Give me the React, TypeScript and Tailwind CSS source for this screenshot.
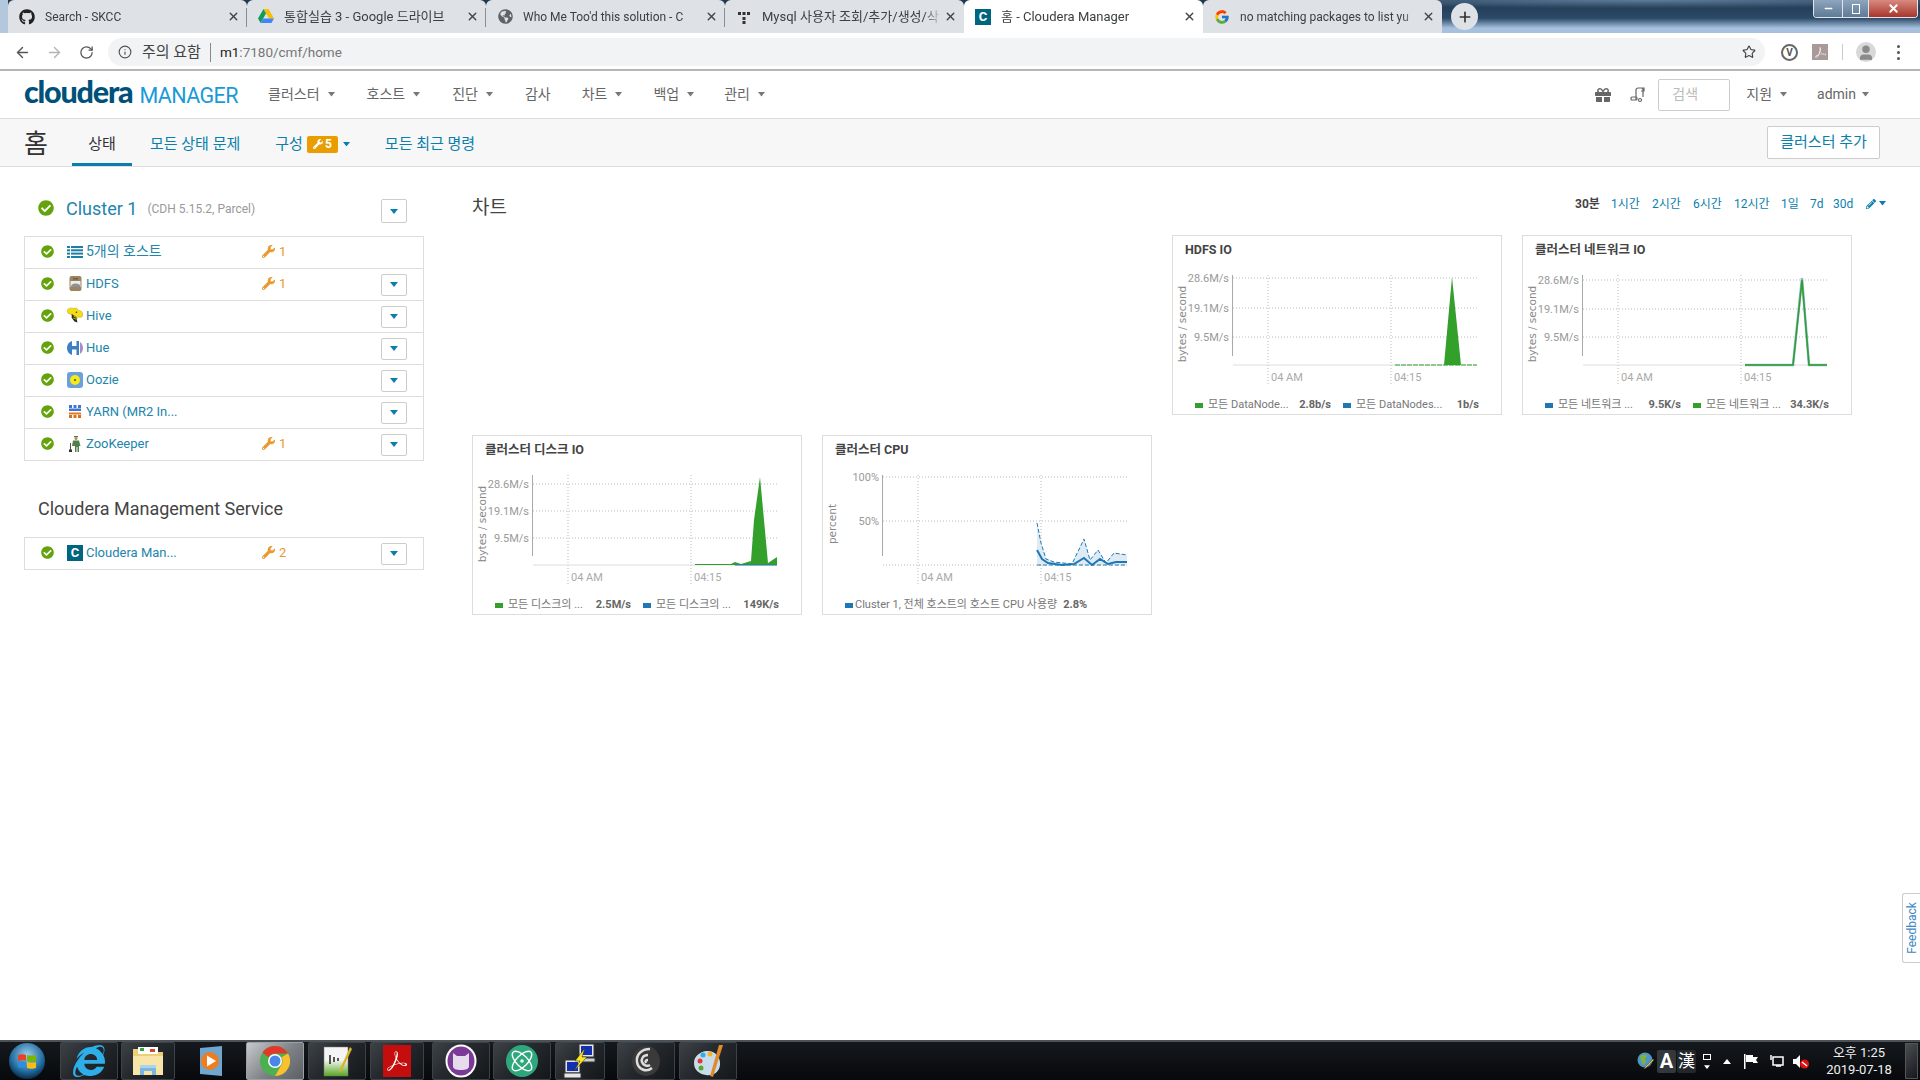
import React from 'react';
import { ArrowLeft, ArrowRight, RotateCw, Info, Star, Plus, X, Minus, User, Atom } from 'lucide-react';
import {
  FaGithub, FaGlobeAmericas, FaCheckCircle, FaWrench, FaGift,
  FaPencilAlt, FaInternetExplorer,
} from 'react-icons/fa';
import { FcGoogle } from 'react-icons/fc';
import { SiAdobeacrobatreader } from 'react-icons/si';

const Caret = ({ color = '#777', size = 7 }: { color?: string; size?: number }) => (
  <svg width={size} height={size / 2 + 1} viewBox="0 0 8 5" className="shrink-0">
    <path d="M0 0h8L4 5z" fill={color} />
  </svg>
);

const DriveIcon = () => (
  <svg width="16" height="15" viewBox="0 0 16 15">
    <path d="M5.5 0h5l5.5 9.5h-5z" fill="#fbbc04" />
    <path d="M5.5 0 0 9.5 2.6 14l5.4-9.5z" fill="#0f9d58" />
    <path d="M2.6 14h10.8l2.6-4.5H5.3z" fill="#4285f4" />
  </svg>
);

const MysqlIcon = () => (
  <svg width="14" height="14" viewBox="0 0 14 14" fill="#333">
    <rect x="1" y="2" width="3" height="3" />
    <rect x="5.5" y="2" width="3" height="3" />
    <rect x="10" y="2" width="3" height="3" />
    <rect x="5.5" y="7" width="3" height="3" />
    <rect x="5.5" y="11" width="3" height="3" />
  </svg>
);

const ClouderaC = ({ size = 16 }: { size?: number }) => (
  <span
    style={{ width: size, height: size, fontSize: size - 3 }}
    className="flex shrink-0 items-center justify-center bg-[#00657f] font-bold leading-none text-white"
  >
    C
  </span>
);

const tabs = [
  { title: 'Search - SKCC', size: 'text-[12px]', icon: <FaGithub size={16} className="text-[#222]" /> },
  { title: '통합실습 3 - Google 드라이브', size: 'text-[13px]', icon: <DriveIcon /> },
  { title: "Who Me Too'd this solution - C", size: 'text-[12px]', icon: <FaGlobeAmericas size={15} className="text-[#5f6368]" /> },
  { title: 'Mysql 사용자 조회/추가/생성/삭', size: 'text-[13px]', icon: <MysqlIcon /> },
  { title: '홈 - Cloudera Manager', size: 'text-[13px]', icon: <ClouderaC />, active: true },
  { title: 'no matching packages to list yu', size: 'text-[12px]', icon: <FcGoogle size={16} /> },
];

function TabStrip() {
  return (
    <div className="flex h-[33px] items-start bg-[linear-gradient(to_right,#b4c8dd_0px,#b4c8dd_8px,transparent_8px),radial-gradient(ellipse_at_1650px_0px,#5d7d9b_0%,transparent_18%),linear-gradient(to_bottom,#1f374f_0%,#2b4a68_55%,#a6c0dd_85%,#a6c0dd_100%)] pl-2">
      {tabs.map((tab, i) => (
        <div
          key={i}
          className={`relative flex h-[33px] w-[239px] shrink-0 items-center rounded-t-[6px] pl-[11px] ${tab.active ? 'bg-white' : 'bg-[#dee1e6]'}`}
        >
          <span className="flex w-[16px] shrink-0 items-center justify-center">{tab.icon}</span>
          <span className={`ml-[10px] w-[180px] overflow-hidden whitespace-nowrap text-[#3c4043] [mask-image:linear-gradient(to_right,black_90%,transparent)] ${tab.size}`}>
            {tab.title}
          </span>
          <X size={13} strokeWidth={2.5} className="absolute left-[219px] top-[10px] text-[#444]" />
          {i < 3 && <span className="absolute right-0 top-[8px] h-[19px] w-px bg-[#8b8d90]" />}
        </div>
      ))}
      <div className="ml-[9px] mt-[3px] flex h-[27px] w-[27px] items-center justify-center rounded-full bg-[#dee1e6]">
        <Plus size={16} strokeWidth={2.5} className="text-[#333]" />
      </div>
      <div className="ml-auto mr-[2px] flex h-[18px] overflow-hidden rounded-b-[4px] border border-t-0 border-[#dfe6ee]">
        <div className="flex w-[28px] items-center justify-center bg-[linear-gradient(#8ea5bd,#5f7a95)] text-white">
          <Minus size={11} strokeWidth={3} />
        </div>
        <div className="flex w-[27px] items-center justify-center border-x border-[#dfe6ee] bg-[linear-gradient(#8ea5bd,#5f7a95)]">
          <span className="h-[10px] w-[8px] border border-white" />
        </div>
        <div className="flex w-[48px] items-center justify-center bg-[linear-gradient(#d88a80,#a8352a)] text-white">
          <X size={13} strokeWidth={3.5} />
        </div>
      </div>
    </div>
  );
}

function Toolbar() {
  return (
    <div className="flex h-[38px] items-center border-b-2 border-[#b5b5b5] bg-white pl-[14px] pt-[2px]">
      <ArrowLeft size={17} className="text-[#555]" />
      <ArrowRight size={17} className="ml-[15px] text-[#b5b5b5]" />
      <RotateCw size={15} className="ml-[16px] text-[#555]" />
      <div className="ml-[14px] flex h-[28px] w-[1657px] items-center rounded-full bg-[#f1f3f4] pl-[10px]">
        <Info size={14} className="text-[#555]" />
        <span className="ml-[10px] text-[15px] text-[#444]">주의 요함</span>
        <span className="ml-[9px] h-[19px] w-px bg-[#888]" />
        <span className="ml-[9px] text-[13.5px] text-[#222]">m1</span>
        <span className="text-[13.5px] text-[#777]">:7180/cmf/home</span>
        <Star size={14} className="ml-auto mr-[9px] text-[#444]" />
      </div>
      <div className="ml-[16px] flex h-[17px] w-[17px] items-center justify-center rounded-full border-2 border-[#666] text-[10px] font-bold text-[#555]">
        V
      </div>
      <div className="ml-[14px] flex h-[16px] w-[16px] items-center justify-center bg-[#a99] text-[#fff]">
        <SiAdobeacrobatreader size={11} />
      </div>
      <span className="ml-[14px] h-[16px] w-px bg-[#ccc]" />
      <div className="ml-[13px] flex h-[20px] w-[20px] items-end justify-center overflow-hidden rounded-full bg-[#d8d8d8]">
        <User size={18} fill="#8a8a8a" stroke="#8a8a8a" />
      </div>
      <div className="ml-[21px] flex flex-col gap-[3px]">
        <span className="h-[3px] w-[3px] rounded-full bg-[#555]" />
        <span className="h-[3px] w-[3px] rounded-full bg-[#555]" />
        <span className="h-[3px] w-[3px] rounded-full bg-[#555]" />
      </div>
    </div>
  );
}

const navItems = [
  { label: '클러스터', caret: true, nudge: '' },
  { label: '호스트', caret: true, nudge: '' },
  { label: '진단', caret: true, nudge: '' },
  { label: '감사', caret: false, nudge: '' },
  { label: '차트', caret: true, nudge: '-ml-[1px]' },
  { label: '백업', caret: true, nudge: '-ml-[1px]' },
  { label: '관리', caret: true, nudge: '-ml-[2px]' },
];

function TopNav() {
  return (
    <div className="flex h-[48px] items-center border-b border-[#ddd] bg-white pl-6">
      <div className="flex w-[216px] -translate-y-[3px] items-baseline">
        <span className="text-[30.5px] font-black leading-none tracking-[-1.2px] text-[#00517a] [font-family:Lato,sans-serif]">cloudera</span>
        <span className="ml-[7px] text-[21.5px] leading-none tracking-[-0.6px] text-[#1a9ad6]">MANAGER</span>
      </div>
      <div className="ml-[28px] flex gap-8">
        {navItems.map(item => (
          <div key={item.label} className={`flex items-center gap-2 text-[14px] text-[#666] ${item.nudge}`}>
            {item.label}
            {item.caret && <Caret />}
          </div>
        ))}
      </div>
      <div className="ml-auto flex items-center pr-[51px]">
        <FaGift size={16} className="text-[#666]" />
        <svg width="16" height="16" viewBox="0 0 16 16" fill="none" stroke="#666" strokeWidth="1.2" className="ml-[19px]">
          <path d="M6 13V3a2 2 0 0 1 2-2h6v3h-3M8 1h3a2 2 0 0 1 2 2v7" />
          <rect x="1" y="10" width="6" height="3" rx="1" />
          <circle cx="10" cy="13" r="1.5" />
        </svg>
        <div className="ml-[12px] flex h-[32px] w-[72px] items-center rounded-[2px] border border-[#ccc] bg-white pl-[13px] text-[14px] text-[#bbb]">
          검색
        </div>
        <div className="ml-[16px] flex items-center gap-2 text-[14px] text-[#666]">
          지원
          <Caret />
        </div>
        <div className="ml-[30px] flex items-center gap-[6px] text-[14px] text-[#666]">
          admin
          <Caret />
        </div>
      </div>
    </div>
  );
}

function SubNav() {
  return (
    <div className="flex h-[48px] items-stretch border-b border-[#ddd] bg-[#f7f7f7] pl-6 text-[15px]">
      <div className="flex w-[48px] items-center pt-[2px] text-[26px] leading-none text-[#333]">홈</div>
      <div className="flex w-[60px] items-center justify-center border-b-[3px] border-[#0a7fad] pt-[6px] text-[#333]">상태</div>
      <div className="ml-[18px] flex items-center pt-[3px] text-[#0a7fad]">모든 상태 문제</div>
      <div className="ml-[35px] flex items-center pt-[3px] text-[#0a7fad]">
        구성
        <span className="ml-[4px] flex h-[17px] w-[31px] items-center justify-center gap-[2px] rounded-[2px] bg-[#e99d00] text-[12px] font-bold text-white">
          <FaWrench size={10} />5
        </span>
        <span className="ml-[5px]">
          <Caret color="#0a7fad" />
        </span>
      </div>
      <div className="ml-[35px] flex items-center pt-[3px] text-[#0a7fad]">모든 최근 명령</div>
      <div className="ml-auto mr-[40px] flex items-center">
        <div className="flex h-[33px] w-[113px] items-center justify-center rounded-[2px] border border-[#ccc] bg-white text-[#0a7fad]">
          클러스터 추가
        </div>
      </div>
    </div>
  );
}

const HostsIcon = () => (
  <svg width="16" height="12" viewBox="0 0 16 12" fill="#1c7fa6">
    <rect x="0" y="0" width="3" height="2" />
    <rect x="4" y="0" width="12" height="2" />
    <rect x="0" y="3.300" width="3" height="2" />
    <rect x="4" y="3.300" width="12" height="2" />
    <rect x="0" y="6.600" width="3" height="2" />
    <rect x="4" y="6.600" width="12" height="2" />
    <rect x="0" y="10" width="3" height="2" />
    <rect x="4" y="10" width="12" height="2" />
  </svg>
);

const HdfsIcon = () => (
  <svg width="13" height="15" viewBox="0 0 13 15">
    <rect x="0.500" y="0" width="12" height="15" rx="2" fill="#9a8560" />
    <rect x="1.500" y="5" width="10" height="6" fill="#eeece6" />
    <path d="M2 10c2-3 5-3 9-1v2H2z" fill="#8d9296" />
    <rect x="4" y="2" width="5" height="1.500" fill="#6f5f44" />
  </svg>
);

const HiveIcon = () => (
  <svg width="17" height="17" viewBox="0 0 17 17">
    <path d="M0 3c2-3 5-3 7-2 2-1 4 0 5 2 2 0 4 1 5 4 0 3-2 4-4 3l-2 1-4-3C4 8 2 6 1 6z" fill="#f4dd12" stroke="#a08f10" strokeWidth=".4" />
    <path d="M5 7l5 3 1 6-3-1-3-4z" fill="#2e2a18" />
    <path d="M7 9l3 1.500M6.500 11l3.500 1.500" stroke="#f4dd12" strokeWidth=".8" />
    <circle cx="10" cy="5" r=".8" fill="#333" />
  </svg>
);

const HueIcon = () => (
  <svg width="16" height="16" viewBox="0 0 16 16">
    <path d="M5 1v14C2 14 0 11.500 0 8s2-6 5-7z" fill="#3d7fc4" />
    <rect x="4" y="6" width="8" height="3.500" fill="#3d7fc4" />
    <rect x="9.500" y="1" width="2.500" height="14" fill="#3d7fc4" />
    <path d="M13 2c2 1.500 3 3.500 3 6s-1 4.500-3 6z" fill="#a88cc8" />
  </svg>
);

const OozieIcon = () => (
  <svg width="16" height="16" viewBox="0 0 16 16">
    <rect width="16" height="16" rx="3" fill="#6aa0dc" />
    <circle cx="8" cy="8" r="5" fill="#f6ea12" />
    <circle cx="8" cy="8" r="1" fill="#444" />
  </svg>
);

const YarnIcon = () => (
  <svg width="12" height="13" viewBox="0 0 12 13">
    <rect x="0" y="0" width="3" height="3" fill="#3f74cf" />
    <rect x="4.500" y="0" width="3" height="3" fill="#3f74cf" />
    <rect x="9" y="0" width="3" height="3" fill="#3f74cf" />
    <rect x="0" y="3.500" width="12" height="2.500" fill="#3f74cf" />
    <rect x="0" y="7.500" width="12" height="2" fill="#e07a20" />
    <rect x="0" y="10" width="3" height="3" fill="#d9701a" />
    <rect x="4.500" y="10" width="3" height="3" fill="#d9701a" />
    <rect x="9" y="10" width="3" height="3" fill="#d9701a" />
  </svg>
);

const ZookeeperIcon = () => (
  <svg width="12" height="16" viewBox="0 0 12 16">
    <rect x="5" y="0" width="4" height="1.200" fill="#55704a" />
    <circle cx="7" cy="2.500" r="1.500" fill="#b58a60" />
    <path d="M4 4.500h6l1.500 5.500h-1.500V16H8.500v-5h-1v5H6v-6H3z" fill="#4f7f4a" />
    <rect x="1" y="7" width="1" height="7" fill="#6b5030" />
    <rect x="0" y="13.500" width="3" height="2.500" fill="#333" />
  </svg>
);

const services = [
  { name: '5개의 호스트', icon: <HostsIcon />, wrench: 1, noMenu: true },
  { name: 'HDFS', icon: <HdfsIcon />, wrench: 1 },
  { name: 'Hive', icon: <HiveIcon /> },
  { name: 'Hue', icon: <HueIcon /> },
  { name: 'Oozie', icon: <OozieIcon /> },
  { name: 'YARN (MR2 In...', icon: <YarnIcon /> },
  { name: 'ZooKeeper', icon: <ZookeeperIcon />, wrench: 1 },
];

type RowProps = { name: string; icon: React.ReactNode; wrench?: number; noMenu?: boolean };

const MenuButton = ({ h = 'h-[22px]' }: { h?: string }) => (
  <div className={`flex w-[26px] items-center justify-center rounded-[2px] border border-[#ccc] bg-white ${h}`}>
    <Caret color="#0a7fad" size={8} />
  </div>
);

function ServiceRow({ name, icon, wrench, noMenu }: RowProps) {
  const hangul = /[가-힣]/.test(name);
  return (
    <div className="flex h-8 items-center border-b border-[#ddd] pl-[16px] last:h-[31px] last:border-b-0">
      <FaCheckCircle size={13} className="shrink-0 -translate-y-[1px] text-[#65a30d]" />
      <span className="ml-[13px] flex w-[16px] shrink-0 -translate-y-[1px] justify-center">{icon}</span>
      <span className={`ml-[3px] w-[176px] -translate-y-[1px] whitespace-nowrap text-[#2285ad] ${hangul ? 'text-[14px]' : 'text-[13px]'}`}>{name}</span>
      <span className="flex w-[119px] -translate-y-[1px] items-center gap-[4px] text-[13px] text-[#e89a2c]">
        {wrench && (
          <>
            <FaWrench size={13} />
            {wrench}
          </>
        )}
      </span>
      {!noMenu && <MenuButton />}
    </div>
  );
}

function Sidebar() {
  return (
    <div className="w-[400px] shrink-0 pt-[32px]">
      <div className="flex h-[24px] items-center pl-[14px]">
        <FaCheckCircle size={16} className="-translate-y-[3px] text-[#65a30d]" />
        <span className="ml-[12px] -translate-y-[3px] text-[18px] text-[#2285ad]">Cluster 1</span>
        <span className="ml-[10px] -translate-y-[2px] text-[12px] text-[#999]">(CDH 5.15.2, Parcel)</span>
        <span className="ml-auto mr-[17px]">
          <MenuButton h="h-[24px]" />
        </span>
      </div>
      <div className="mt-[13px] border border-[#ddd]">
        {services.map(s => (
          <ServiceRow key={s.name} {...s} />
        ))}
      </div>
      <h2 className="mt-[36px] pl-[14px] text-[18px] leading-[24px] text-[#444]">Cloudera Management Service</h2>
      <div className="mt-[16px] border border-[#ddd]">
        <ServiceRow name="Cloudera Man..." icon={<ClouderaC />} wrench={2} />
      </div>
    </div>
  );
}

type Grid = { y: number; label: string };
type LegendItem = { color: string; label: string; value: string };

type ChartProps = {
  title: string;
  axis: string;
  grid: Grid[];
  legend: LegendItem[];
  wide?: boolean;
  dottedBase?: boolean;
  children: React.ReactNode;
  className?: string;
};

function Chart({ title, axis, grid, legend, wide, dottedBase, children, className }: ChartProps) {
  return (
    <div className={`h-[180px] border border-[#ddd] bg-white ${className ?? ''}`}>
      <div className="pl-[12px] pt-[6px] text-[12.5px] font-bold leading-[16px] text-[#444]">{title}</div>
      <svg width="328" height="130" viewBox="1 23 328 130" className="block">
        <text
          transform="rotate(-90 14 89)"
          x="14"
          y="89"
          textAnchor="middle"
          fontSize="10.5"
          fill="#888"
          style={{ fontFamily: '"DejaVu Sans", sans-serif' }}
        >
          {axis}
        </text>
        <line x1="60.5" y1="40" x2="60.5" y2="121" stroke="#aaa" />
        {grid.map(g => (
          <g key={g.label}>
            <line x1="61" y1={g.y} x2="305" y2={g.y} stroke="#bbb" strokeDasharray="1 2" />
            <text x="57" y={g.y + 4} textAnchor="end" fontSize="11" fill="#999">
              {g.label}
            </text>
          </g>
        ))}
        <line x1="96" y1="40" x2="96" y2="151" stroke="#bbb" strokeDasharray="1 2" />
        <line x1="219" y1="40" x2="219" y2="151" stroke="#bbb" strokeDasharray="1 2" />
        <line x1="61" y1="130" x2="305" y2="130" stroke={dottedBase ? '#bbb' : '#ddd'} strokeDasharray={dottedBase ? '1 2' : undefined} />
        <text x="99" y="146" fontSize="11" fill="#aaa">04 AM</text>
        <text x="222" y="146" fontSize="11" fill="#aaa">04:15</text>
        {children}
      </svg>
      <div className="mt-[10px] flex gap-[12px] pl-[22px] text-[11px] leading-[14px] text-[#777]">
        {legend.map(item => (
          <div key={item.label + item.value} className={`flex items-center whitespace-nowrap ${wide ? '' : 'w-[136px]'}`}>
            <span className="h-[5px] w-[8px] shrink-0" style={{ backgroundColor: item.color }} />
            <span className={`${wide ? 'ml-[2px]' : 'ml-[5px]'} flex-1`}>{item.label}</span>
            <span className={`${wide ? 'ml-[6px]' : ''} font-bold text-[#666]`}>{item.value}</span>
          </div>
        ))}
      </div>
    </div>
  );
}

const GREEN = '#33a02c';
const BLUE = '#1f78b4';
const ioGrid = [
  { y: 43, label: '28.6M/s' },
  { y: 73, label: '19.1M/s' },
  { y: 102, label: '9.5M/s' },
];

function ChartsPanel() {
  return (
    <div className="flex-1 pl-[48px] pr-[34px] pt-[26px]">
      <div className="flex h-[28px] items-center">
        <h2 className="pt-[2px] text-[19px] text-[#444]">차트</h2>
        <div className="ml-auto -mt-[7px] flex items-center text-[12px] text-[#0a7fad]">
          <span className="w-[36px] font-bold text-[#444]">30분</span>
          <span className="w-[41px]">1시간</span>
          <span className="w-[41px]">2시간</span>
          <span className="w-[41px]">6시간</span>
          <span className="w-[47px]">12시간</span>
          <span className="w-[29px]">1일</span>
          <span className="w-[23px]">7d</span>
          <span className="w-[33px]">30d</span>
          <FaPencilAlt size={10} />
          <span className="ml-[3px]">
            <Caret color="#0a7fad" />
          </span>
        </div>
      </div>
      <div className="mt-[14px] grid grid-cols-[repeat(4,330px)] gap-x-5 gap-y-5">
        <Chart
          className="col-start-3"
          title="HDFS IO"
          axis="bytes / second"
          grid={ioGrid}
          legend={[
            { color: GREEN, label: '모든 DataNode...', value: '2.8b/s' },
            { color: BLUE, label: '모든 DataNodes...', value: '1b/s' },
          ]}
        >
          <path d="M272 130 280 42 289 130z" fill={GREEN} />
          <line x1="223" y1="130" x2="305" y2="130" stroke={GREEN} strokeWidth="1" strokeDasharray="5 1" />
        </Chart>
        <Chart
          title="클러스터 네트워크 IO"
          axis="bytes / second"
          grid={[
            { y: 45, label: '28.6M/s' },
            { y: 74, label: '19.1M/s' },
            { y: 102, label: '9.5M/s' },
          ]}
          legend={[
            { color: BLUE, label: '모든 네트워크 ...', value: '9.5K/s' },
            { color: GREEN, label: '모든 네트워크 ...', value: '34.3K/s' },
          ]}
        >
          <path d="M223 130H271L280 43 287 130H305" fill="none" stroke={BLUE} strokeWidth="2.5" opacity=".5" />
          <path d="M223 130H271L280 45 287 130H305" fill="none" stroke={GREEN} strokeWidth="1.6" />
        </Chart>
        <Chart
          className="col-start-1"
          title="클러스터 디스크 IO"
          axis="bytes / second"
          grid={[
            { y: 49, label: '28.6M/s' },
            { y: 76, label: '19.1M/s' },
            { y: 103, label: '9.5M/s' },
          ]}
          legend={[
            { color: GREEN, label: '모든 디스크의 ...', value: '2.5M/s' },
            { color: BLUE, label: '모든 디스크의 ...', value: '149K/s' },
          ]}
        >
          <path d="M223 130V129H259L263 127 269 129 279 126 282 85 288 42 296 128 305 122V130z" fill={GREEN} />
          <line x1="263" y1="130" x2="305" y2="130" stroke={BLUE} strokeWidth="1" />
        </Chart>
        <Chart
          title="클러스터 CPU"
          axis="percent"
          dottedBase
          wide
          grid={[
            { y: 42, label: '100%' },
            { y: 86, label: '50%' },
          ]}
          legend={[{ color: BLUE, label: 'Cluster 1, 전체 호스트의 호스트 CPU 사용량', value: '2.8%' }]}
        >
          <path
            d="M215 88 219 108 224 124 232 127 250 129 262 104 268 125 276 115 284 128 292 118 305 120V130H215z"
            fill="#deebf5"
          />
          <path
            d="M215 88 219 108 224 124 232 127 250 129 262 104 268 125 276 115 284 128 292 118 305 120"
            fill="none"
            stroke={BLUE}
            strokeWidth="1"
            strokeDasharray="4 2"
          />
          <path d="M215 130H305" fill="none" stroke={BLUE} strokeWidth="1" strokeDasharray="4 2" />
          <path
            d="M215 115 220 124 226 128 240 130 252 129 262 123 270 130 278 124 286 129 294 127 305 127"
            fill="none"
            stroke={BLUE}
            strokeWidth="2"
          />
        </Chart>
      </div>
    </div>
  );
}

const TaskButton = ({ children, w = 'w-[58px]', active, className }: { children: React.ReactNode; w?: string; active?: boolean; className?: string }) => (
  <div
    className={`flex h-[38px] shrink-0 items-center justify-center rounded-[2px] border ${w} ${className ?? ''} ${
      active
        ? 'border-[#9aa0a6] bg-[linear-gradient(135deg,#c8cacc_0%,#7d8185_55%,#5c6064_100%)]'
        : 'border-[#3c4248] bg-[linear-gradient(135deg,#3d4247_0%,#25292d_45%,#14171a_100%)]'
    }`}
  >
    {children}
  </div>
);

const StartOrb = () => (
  <svg width="38" height="38" viewBox="0 0 38 38">
    <defs>
      <radialGradient id="orb" cx="50%" cy="35%" r="65%">
        <stop offset="0%" stopColor="#9fd0ee" />
        <stop offset="70%" stopColor="#1f6a9e" />
        <stop offset="100%" stopColor="#0b2b45" />
      </radialGradient>
    </defs>
    <circle cx="19" cy="19" r="18" fill="url(#orb)" />
    <path d="M10 13c3-1 6-1 8 0v6c-2-1-5-1-8 0z" fill="#e8432a" />
    <path d="M19 13c3 1 6 1 9 0v6c-3 1-6 1-9 0z" fill="#7ab800" />
    <path d="M10 20c3-1 6-1 8 0v6c-2-1-5-1-8 0z" fill="#2a8fe0" />
    <path d="M19 20c3 1 6 1 9 0v6c-3 1-6 1-9 0z" fill="#fbbc14" />
  </svg>
);

const FolderIcon = () => (
  <svg width="32" height="30" viewBox="0 0 32 30">
    <path d="M1 3h12l2 3h16v23H1z" fill="#eccf78" />
    <rect x="6" y="1" width="20" height="7" fill="#fff" />
    <rect x="8" y="2" width="4" height="3" fill="#38a838" />
    <rect x="18" y="3" width="5" height="3" fill="#d8452e" />
    <path d="M1 10h30v19H1z" fill="#f7e6a8" />
    <path d="M8 22h16v7h-4v-4h-8v4H8z" fill="#79b7e2" />
    <rect x="8" y="19" width="16" height="3" fill="#a9d4ef" />
  </svg>
);

const MediaIcon = () => (
  <svg width="26" height="32" viewBox="0 0 26 32">
    <path d="M2 3 24 1v30L2 29z" fill="#6ea6cf" />
    <circle cx="12" cy="16" r="9" fill="#ed7d1f" />
    <path d="M9 10.5 18 16l-9 5.500z" fill="#fff" />
  </svg>
);

const ChromeIcon = () => (
  <svg width="30" height="30" viewBox="0 0 30 30">
    <circle cx="15" cy="15" r="15" fill="#4caf50" />
    <path d="M15 0a15 15 0 0 1 13 7.500H15a7.500 7.500 0 0 0-6.500 3.750L2.500 6.500A15 15 0 0 1 15 0z" fill="#e3372c" />
    <path d="M28 7.500A15 15 0 0 1 15 30l6.500-11.250A7.500 7.500 0 0 0 21.500 11.250z" fill="#fbc02d" />
    <circle cx="15" cy="15" r="7" fill="#fff" />
    <circle cx="15" cy="15" r="5.500" fill="#4a86e8" />
  </svg>
);

const NotepadIcon = () => (
  <svg width="30" height="32" viewBox="0 0 30 32">
    <defs>
      <linearGradient id="np" x1="0" y1="0" x2="0" y2="1">
        <stop offset="45%" stopColor="#f4f4f4" />
        <stop offset="100%" stopColor="#56a820" />
      </linearGradient>
    </defs>
    <rect x="2" y="2" width="24" height="29" fill="url(#np)" stroke="#777" strokeWidth=".5" />
    <path d="M8 10v9M12 12v5M16 13v3" stroke="#222" strokeWidth="1.5" />
    <path d="M28 2 18 24l-1 4 3-3L30 4z" fill="#d9b42a" />
  </svg>
);

const CatIcon = () => (
  <svg width="32" height="34" viewBox="0 0 32 34">
    <ellipse cx="16" cy="17" rx="15.500" ry="16.500" fill="#fff" />
    <ellipse cx="16" cy="17" rx="13.500" ry="14.500" fill="#7b3a96" />
    <path d="M8 9l4 3h8l4-3v13c0 3-3 4-8 4s-8-1-8-4z" fill="#e6dcec" />
  </svg>
);

const PuttyIcon = () => (
  <svg width="34" height="36" viewBox="0 0 34 36">
    <rect x="16" y="1" width="15" height="13" fill="#e5e5e5" stroke="#333" />
    <rect x="18" y="3" width="11" height="9" fill="#1230b0" />
    <rect x="17" y="15" width="15" height="4" fill="#cfcfcf" stroke="#333" />
    <rect x="2" y="17" width="15" height="13" fill="#e5e5e5" stroke="#333" />
    <rect x="4" y="19" width="11" height="9" fill="#1230b0" />
    <rect x="1" y="30" width="17" height="5" fill="#e5e5e5" stroke="#333" />
    <path d="M22 5 12 18h5L11 28 24 14h-5z" fill="#ffe81a" stroke="#222" strokeWidth=".5" />
  </svg>
);

const SwirlIcon = () => (
  <svg width="30" height="32" viewBox="0 0 30 32" fill="none" stroke="#ddd" strokeWidth="2.500">
    <ellipse cx="15" cy="16" rx="14" ry="15" fill="#3a3a3a" stroke="none" />
    <path d="M19 4C10 4 5 10 6 17c1 7 9 11 15 6" />
    <path d="M17 10c-5 0-7 4-6 7 1 3 5 5 8 3" />
    <path d="M17 15c-2 0-3 1-2 3" />
  </svg>
);

const PaintIcon = () => (
  <svg width="32" height="34" viewBox="0 0 32 34">
    <path d="M14 7c8-1 15 5 14 14s-9 11-14 10C7 30 2 26 2 19S8 8 14 7z" fill="#c9dcec" />
    <circle cx="8" cy="17" r="2.500" fill="#e0392c" />
    <circle cx="11" cy="11" r="2.500" fill="#3aa9e0" />
    <circle cx="18" cy="10" r="2.500" fill="#f0b428" />
    <circle cx="9" cy="24" r="2.500" fill="#59a82c" />
    <path d="M31 1 21 33l-3-1L27 1z" fill="#e08a2c" />
  </svg>
);

const ImeGlobe = () => (
  <svg width="18" height="18" viewBox="0 0 18 18">
    <circle cx="8" cy="8" r="7.500" fill="#4f93c9" />
    <path d="M3 4c3-2 6-2 7 0l-2 3 1 3-3 3-2-4z" fill="#7fb23c" />
    <path d="M17 8 9 16l-2 1 1-2 8-8z" fill="#f2c230" stroke="#333" strokeWidth=".4" />
  </svg>
);

function Taskbar() {
  return (
    <div className="flex h-[40px] items-center border-t-2 border-[#4a5258] bg-[linear-gradient(#15191d,#07090c)]">
      <div className="flex w-[60px] shrink-0 pl-[8px]">
        <StartOrb />
      </div>
      <TaskButton>
        <FaInternetExplorer size={32} className="text-[#2eaee8]" />
      </TaskButton>
      <TaskButton w="w-[54px]" className="ml-[3px]">
        <FolderIcon />
      </TaskButton>
      <div className="ml-[1px] flex w-[70px] justify-center">
        <MediaIcon />
      </div>
      <TaskButton active>
        <ChromeIcon />
      </TaskButton>
      <TaskButton className="ml-[4px]">
        <NotepadIcon />
      </TaskButton>
      <TaskButton w="w-[54px]" className="ml-[4px]">
        <span className="flex h-[32px] w-[28px] items-center justify-center bg-[#c40d0d] text-white">
          <SiAdobeacrobatreader size={20} />
        </span>
      </TaskButton>
      <TaskButton className="ml-[8px]">
        <CatIcon />
      </TaskButton>
      <TaskButton className="ml-[3px]">
        <span className="flex h-[32px] w-[32px] items-center justify-center rounded-full bg-[#2fa77d] text-white">
          <Atom size={26} strokeWidth={1.25} />
        </span>
      </TaskButton>
      <TaskButton w="w-[50px]" className="ml-[4px]">
        <PuttyIcon />
      </TaskButton>
      <TaskButton className="ml-[12px]">
        <SwirlIcon />
      </TaskButton>
      <TaskButton className="ml-[4px]">
        <PaintIcon />
      </TaskButton>
      <div className="ml-auto flex items-center text-white">
        <ImeGlobe />
        <span className="ml-[2px] flex h-[23px] w-[19px] items-center justify-center rounded-[2px] bg-[#33383d] text-[20px] font-bold leading-none">A</span>
        <span className="ml-[1px] flex h-[23px] w-[19px] items-center justify-center rounded-[2px] bg-[#23272b] text-[17px] leading-none">漢</span>
        <span className="ml-[7px] flex flex-col items-center gap-[5px]">
          <span className="h-[6px] w-[8px] border border-white" />
          <Caret color="#fff" size={6} />
        </span>
        <svg width="8" height="5" viewBox="0 0 8 5" className="ml-[12px]">
          <path d="M0 5h8L4 0z" fill="#fff" />
        </svg>
        <svg width="15" height="15" viewBox="0 0 15 15" className="ml-[13px]" fill="#fff">
          <rect x="0" y="0" width="1.500" height="15" />
          <path d="M2 1h7v2h5l-2 3 2 3H9V8H2z" />
        </svg>
        <svg width="14" height="14" viewBox="0 0 14 14" className="ml-[11px]" fill="none" stroke="#fff" strokeWidth="1.500">
          <rect x="3" y="3" width="10" height="8" />
          <path d="M1 1v5M6 12h5" />
        </svg>
        <svg width="16" height="15" viewBox="0 0 16 15" className="ml-[9px]">
          <path d="M0 5h3l4-4v13l-4-4H0z" fill="#fff" />
          <circle cx="11.500" cy="10" r="4.500" fill="#e01010" />
          <path d="M9 8l5 4" stroke="#fff" strokeWidth="1.500" />
        </svg>
        <div className="ml-[14px] flex w-[72px] flex-col items-center text-[13px] leading-[17px] text-[#eee]">
          <span>오후 1:25</span>
          <span>2019-07-18</span>
        </div>
        <div className="ml-[10px] mr-[2px] h-[36px] w-[13px] border border-[#555] bg-[linear-gradient(135deg,#4a4f54,#15181b)]" />
      </div>
    </div>
  );
}

export default function App() {
  return (
    <div className="relative flex h-[1080px] w-[1920px] flex-col overflow-hidden bg-white [font-family:Roboto,'Noto_Sans_CJK_KR',sans-serif]">
      <TabStrip />
      <Toolbar />
      <TopNav />
      <SubNav />
      <div className="flex flex-1 items-start pl-6">
        <Sidebar />
        <ChartsPanel />
      </div>
      <Taskbar />
      <div className="absolute right-0 top-[893px] flex h-[70px] w-[18px] items-center justify-center rounded-l-[3px] border border-r-0 border-[#ccc] bg-white">
        <span className="-rotate-90 whitespace-nowrap text-[12px] text-[#3f88c5]">Feedback</span>
      </div>
    </div>
  );
}
